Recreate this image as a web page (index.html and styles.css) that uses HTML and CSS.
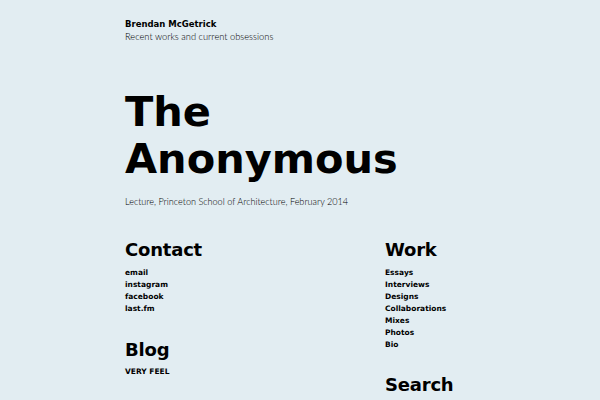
FILE: index.html
```html
<!DOCTYPE html>
<html>
<head>
<meta charset="utf-8">
<link rel="stylesheet" href="styles.css">
</head>
<body>
<div class="page">
  <header class="site">
    <div class="name">Brendan McGetrick</div>
    <div class="tagline">Recent works and current obsessions</div>
  </header>
  <section class="hero">
    <h1 class="title">The<br>Anonymous</h1>
    <p class="meta">Lecture, Princeton School of Architecture, February 2014</p>
  </section>
  <div class="cols">
    <div class="col">
      <h2 class="heading">Contact</h2>
      <ul class="links">
        <li>email</li>
        <li>instagram</li>
        <li>facebook</li>
        <li>last.fm</li>
      </ul>
      <h2 class="heading blog">Blog</h2>
      <ul class="links short">
        <li>VERY FEEL</li>
      </ul>
    </div>
    <div class="col side">
      <h2 class="heading">Work</h2>
      <ul class="links">
        <li>Essays</li>
        <li>Interviews</li>
        <li>Designs</li>
        <li>Collaborations</li>
        <li>Mixes</li>
        <li>Photos</li>
        <li>Bio</li>
      </ul>
      <h2 class="heading search">Search</h2>
    </div>
  </div>
</div>
</body>
</html>
```
FILE: styles.css
```css
html, body {
  margin: 0;
  padding: 0;
  background: #e2edf2;
}
body {
  font-family: "DejaVu Sans", sans-serif;
  color: #000;
}
.page {
  padding: 18px 0 0 125px;
}
.name {
  font-weight: bold;
  font-size: 8.5px;
  line-height: 12px;
}
.tagline {
  font-family: Lato, "DejaVu Sans", sans-serif;
  font-size: 9.3px;
  font-weight: 300;
  line-height: 14px;
  color: #000;
}
.hero {
  margin-top: 44px;
}
.title {
  margin: 0;
  font-size: 41.5px;
  line-height: 47px;
  letter-spacing: 0;
  font-weight: bold;
}
.meta {
  margin: 14px 0 0;
  font-family: Lato, "DejaVu Sans", sans-serif;
  font-size: 9.1px;
  font-weight: 300;
  line-height: 12px;
  color: #000;
}
.cols {
  display: flex;
  margin-top: 31px;
}
.col {
  flex: none;
  width: 260px;
}
.col.side {
  width: auto;
}
.heading {
  margin: 0;
  font-size: 18px;
  line-height: 22px;
  letter-spacing: -0.2px;
}
.links {
  list-style: none;
  margin: 6px 0 0;
  padding: 0;
  font-size: 7.5px;
  font-weight: bold;
  line-height: 12px;
}
.links.short {
  margin-top: 5px;
}
.blog {
  margin-top: 24px;
}
.search {
  margin-top: 23px;
}
```
